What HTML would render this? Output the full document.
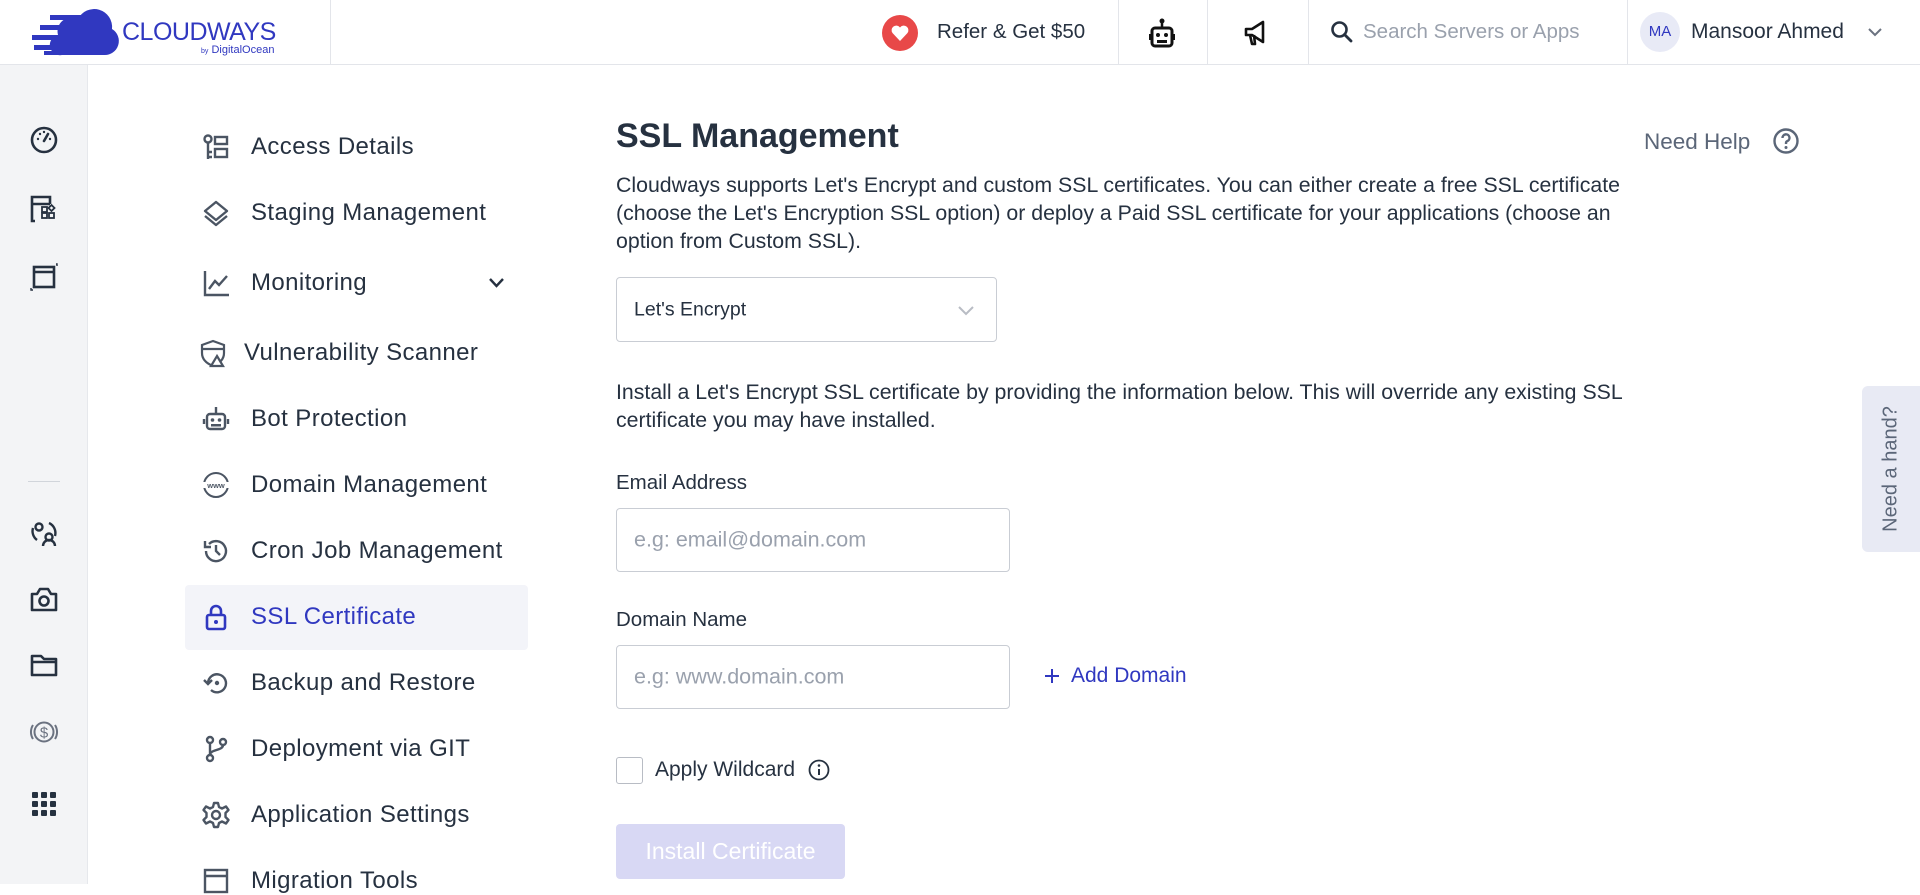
<!DOCTYPE html>
<html><head><meta charset="utf-8"><style>
*{margin:0;padding:0;box-sizing:border-box}
body{width:1920px;height:884px;overflow:hidden;background:#fff;font-family:"Liberation Sans",sans-serif;color:#263140;position:relative}
.a{position:absolute;white-space:nowrap}
.hdr{position:absolute;left:0;top:0;width:1920px;height:65px;border-bottom:1px solid #e3e5ea;background:#fff}
.vd{position:absolute;top:0;width:1px;height:65px;background:#e3e5ea}
.rail{position:absolute;left:0;top:65px;width:88px;height:819px;background:#f3f4f6;border-right:1px solid #e6e8ec}
.ri{position:absolute;left:29px;width:30px;height:30px}
.nav{position:absolute;left:251px;font-size:24px;letter-spacing:.4px;color:#263140;transform:translateY(-50%)}
.ni{position:absolute;left:202px;width:28px;height:28px;transform:translateY(-50%)}
svg{overflow:visible}
.p{font-size:21.3px;line-height:28px;color:#263140}
.inp{position:absolute;border:1px solid #c9cdd4;border-radius:4px;background:#fff}
.ph{position:absolute;left:17px;top:50%;transform:translateY(-50%);font-size:21.5px;color:#9aa1ad}
</style></head><body>
<div class="hdr">
 <svg class="a" style="left:32px;top:11px" width="86" height="44" viewBox="0 0 86 44">
  <path d="M30 44 H72 A14 14 0 0 0 80 18 A18 18 0 0 0 46 8 A14 14 0 0 0 26 24 A10 10 0 0 0 30 44Z" fill="#3038c0"/>
  <rect x="18" y="4" width="32" height="5" fill="#3038c0"/><rect x="8" y="14" width="34" height="5" fill="#3038c0"/><rect x="0" y="24" width="30" height="5" fill="#3038c0"/><rect x="2" y="34" width="18" height="5" fill="#3038c0"/><rect x="12" y="40" width="26" height="4" fill="#3038c0"/>
 </svg>
 <div class="a" style="left:122px;top:18px;font-size:25px;color:#3038c0;letter-spacing:-.5px">CLOUDWAYS</div>
 <div class="a" style="left:201px;top:44px;font-size:11px;color:#3038c0"><span style="font-size:7px">by</span> DigitalOcean</div>
 <div class="vd" style="left:330px"></div>
 <div class="a" style="left:882px;top:15px;width:36px;height:36px;border-radius:50%;background:#e84848"></div>
 <svg class="a" style="left:891px;top:25px" width="18" height="16" viewBox="0 0 18 16"><path d="M9 16 L1.5 8 A4.5 4.5 0 0 1 9 2.5 A4.5 4.5 0 0 1 16.5 8Z" fill="#fff"/></svg>
 <div class="a" style="left:937px;top:20px;font-size:20.5px;color:#263140">Refer &amp; Get $50</div>
 <div class="vd" style="left:1118px"></div>
 <svg class="a" style="left:1148px;top:18px" width="28" height="32" viewBox="0 0 28 32"><line x1="14" y1="2" x2="14" y2="9" stroke="#111" stroke-width="2.5"/><circle cx="14" cy="3" r="2.5" fill="#111"/><rect x="4" y="10" width="20" height="18" rx="3" fill="none" stroke="#111" stroke-width="3"/><rect x="1" y="16" width="3" height="6" fill="#111"/><rect x="24" y="16" width="3" height="6" fill="#111"/><circle cx="10" cy="17" r="2" fill="#111"/><circle cx="18" cy="17" r="2" fill="#111"/><rect x="9" y="22" width="10" height="3" fill="#111"/></svg>
 <div class="vd" style="left:1207px"></div>
 <svg class="a" style="left:1243px;top:20px" width="26" height="26" viewBox="0 0 26 26"><path d="M3 9 H9 L20 2 V22 L9 15 H3Z M7 15 L9 24 H12 L11 15" fill="none" stroke="#111" stroke-width="2.6" stroke-linejoin="round"/></svg>
 <div class="vd" style="left:1308px"></div>
 <svg class="a" style="left:1330px;top:20px" width="24" height="24" viewBox="0 0 24 24"><circle cx="9.5" cy="9.5" r="7" fill="none" stroke="#263140" stroke-width="2.6"/><line x1="14.5" y1="14.5" x2="21" y2="21" stroke="#263140" stroke-width="2.8" stroke-linecap="round"/></svg>
 <div class="a" style="left:1363px;top:20px;font-size:20.5px;color:#9aa1ad">Search Servers or Apps</div>
 <div class="vd" style="left:1627px"></div>
 <div class="a" style="left:1640px;top:12px;width:40px;height:40px;border-radius:50%;background:#e8eaf6;color:#3038c0;font-size:15px;text-align:center;line-height:40px">MA</div>
 <div class="a" style="left:1691px;top:20px;font-size:21px;color:#263140">Mansoor Ahmed</div>
 <svg class="a" style="left:1868px;top:28px" width="14" height="9" viewBox="0 0 14 9"><path d="M1 1 L7 7 L13 1" fill="none" stroke="#6b7280" stroke-width="2"/></svg>
</div>
<div class="rail">
 <svg class="ri" style="top:60px" viewBox="0 0 30 30"><circle cx="15" cy="15" r="12" fill="none" stroke="#263140" stroke-width="2.6"/><line x1="15" y1="16" x2="19" y2="9" stroke="#263140" stroke-width="2.6" stroke-linecap="round"/><circle cx="9" cy="14" r="1.2" fill="#263140"/><circle cx="11" cy="9" r="1.2" fill="#263140"/><circle cx="15" cy="7" r="1.2" fill="#263140"/><circle cx="21" cy="14" r="1.2" fill="#263140"/></svg>
 <svg class="ri" style="top:129px" viewBox="0 0 30 30"><path d="M6 27 H3 V3 H21 V10 M3 10 H21" fill="none" stroke="#263140" stroke-width="2.6"/><rect x="13" y="19" width="5" height="5" fill="none" stroke="#263140" stroke-width="1.8"/><rect x="20" y="19" width="5" height="5" fill="none" stroke="#263140" stroke-width="1.8"/><rect x="13" y="13" width="5" height="5" fill="none" stroke="#263140" stroke-width="1.8"/><path d="M22.5 11 L25.5 14 L22.5 17 L19.5 14Z" fill="none" stroke="#263140" stroke-width="1.8"/></svg>
 <svg class="ri" style="top:197px" viewBox="0 0 30 30"><rect x="5" y="5" width="20" height="20" fill="none" stroke="#263140" stroke-width="2.6"/><line x1="5" y1="10" x2="25" y2="10" stroke="#263140" stroke-width="2.6"/><path d="M27 2 H28 V4 M2 26 V28 H4" fill="none" stroke="#263140" stroke-width="1.4"/></svg>
 <div class="a" style="left:28px;top:416px;width:32px;height:1px;background:#d1d5db"></div>
 <svg class="ri" style="top:453px" viewBox="0 0 30 30"><circle cx="10" cy="9" r="3.5" fill="none" stroke="#263140" stroke-width="2.4"/><circle cx="20" cy="19" r="3.5" fill="none" stroke="#263140" stroke-width="2.4"/><path d="M14 28 A6 6 0 0 1 26 28 M4 10 A11 11 0 0 0 8 22 M26 18 A11 11 0 0 0 20 5" fill="none" stroke="#263140" stroke-width="2.4"/></svg>
 <svg class="ri" style="top:519px" viewBox="0 0 30 30"><path d="M3 10 H8 L11 5 H19 L22 10 H27 V26 H3Z" fill="none" stroke="#263140" stroke-width="2.6" stroke-linejoin="round"/><circle cx="15" cy="17" r="4.5" fill="none" stroke="#263140" stroke-width="2.6"/></svg>
 <svg class="ri" style="top:585px" viewBox="0 0 30 30"><path d="M3 6 H12 L15 9 H27 V25 H3Z M3 12 H27" fill="none" stroke="#263140" stroke-width="2.6" stroke-linejoin="round"/></svg>
 <svg class="ri" style="top:652px" viewBox="0 0 30 30"><circle cx="15" cy="15" r="9.5" fill="none" stroke="#6b7280" stroke-width="2"/><path d="M4 8 A13 13 0 0 0 4 22 M26 8 A13 13 0 0 1 26 22" fill="none" stroke="#6b7280" stroke-width="2"/><text x="15" y="20.5" font-size="15" text-anchor="middle" fill="#6b7280" font-family="Liberation Sans">$</text></svg>
 <svg class="ri" style="top:724px" viewBox="0 0 30 30"><g fill="#263140"><rect x="3" y="3" width="6" height="6" rx="1"/><rect x="12" y="3" width="6" height="6" rx="1"/><rect x="21" y="3" width="6" height="6" rx="1"/><rect x="3" y="12" width="6" height="6" rx="1"/><rect x="12" y="12" width="6" height="6" rx="1"/><rect x="21" y="12" width="6" height="6" rx="1"/><rect x="3" y="21" width="6" height="6" rx="1"/><rect x="12" y="21" width="6" height="6" rx="1"/><rect x="21" y="21" width="6" height="6" rx="1"/></g></svg>
</div>

<div class="a" style="left:185px;top:585px;width:343px;height:65px;background:#f3f4f9;border-radius:4px"></div>
<svg class="ni" style="top:147px" viewBox="0 0 28 28"><g fill="none" stroke="#4b5563" stroke-width="2.4"><circle cx="6" cy="6" r="3.5"/><path d="M6 10 V26 M6 19 H10 M6 24 H10"/><rect x="13" y="4" width="12" height="7"/><rect x="13" y="16" width="12" height="8"/></g></svg>
<div class="nav" style="top:147px">Access Details</div>
<svg class="ni" style="top:213px" viewBox="0 0 28 28"><g fill="none" stroke="#4b5563" stroke-width="2.4" stroke-linejoin="round"><path d="M14 3 L25 12 L14 21 L3 12Z"/><path d="M3 17 L14 26 L25 17"/></g></svg>
<div class="nav" style="top:213px">Staging Management</div>
<svg class="ni" style="top:283px" viewBox="0 0 28 28"><g fill="none" stroke="#4b5563" stroke-width="2.4"><path d="M3 2 V26 H27"/><path d="M7 20 L13 12 L17 16 L25 7"/></g></svg>
<div class="nav" style="top:283px">Monitoring</div>
<svg class="a" style="left:489px;top:278px" width="15" height="10" viewBox="0 0 15 10"><path d="M1 1 L7.5 8 L14 1" fill="none" stroke="#263140" stroke-width="2.4"/></svg>
<svg class="ni" style="top:353px;left:199px" viewBox="0 0 28 28"><g fill="none" stroke="#4b5563" stroke-width="2.2"><path d="M14 2 L25 6 V14 C25 21 19 25 14 27 C9 25 3 21 3 14 V6Z"/><path d="M3 10 H25"/><path d="M18 17 L24 27 H12Z" fill="#fff"/></g></svg>
<div class="nav" style="top:353px;left:244px">Vulnerability Scanner</div>
<svg class="ni" style="top:419px" viewBox="0 0 28 28"><g fill="none" stroke="#4b5563" stroke-width="2.4"><path d="M14 2 V8"/><rect x="5" y="9" width="18" height="15" rx="3"/><path d="M2 14 V19 M26 14 V19"/></g><circle cx="10.5" cy="15" r="1.8" fill="#4b5563"/><circle cx="17.5" cy="15" r="1.8" fill="#4b5563"/><rect x="9" y="19" width="10" height="2.5" fill="#4b5563"/></svg>
<div class="nav" style="top:419px">Bot Protection</div>
<svg class="ni" style="top:485px" viewBox="0 0 28 28"><g fill="none" stroke="#4b5563" stroke-width="2"><circle cx="14" cy="14" r="12"/></g><rect x="0" y="11" width="28" height="6" fill="#fff"/><text x="14" y="17" font-size="7.5" font-weight="bold" text-anchor="middle" fill="#4b5563" font-family="Liberation Sans">www</text></svg>
<div class="nav" style="top:485px">Domain Management</div>
<svg class="ni" style="top:551px" viewBox="0 0 28 28"><g fill="none" stroke="#4b5563" stroke-width="2.4"><path d="M4 14 A10 10 0 1 0 7 7"/><path d="M3 4 V10 H9"/><path d="M14 8 V14 L18 18"/></g></svg>
<div class="nav" style="top:551px">Cron Job Management</div>
<svg class="ni" style="top:617px" viewBox="0 0 28 28"><g fill="none" stroke="#3038c0" stroke-width="2.6"><rect x="5" y="12" width="18" height="14" rx="2"/><path d="M9 12 V8 A5 5 0 0 1 19 8 V12"/></g><circle cx="14" cy="19" r="2" fill="#3038c0"/></svg>
<div class="nav" style="top:617px;color:#3038c0">SSL Certificate</div>
<svg class="ni" style="top:683px" viewBox="0 0 28 28"><g fill="none" stroke="#4b5563" stroke-width="2.4"><path d="M6 14 A9 9 0 1 1 9 21"/><path d="M2 11 L6 15 L10 11"/></g><circle cx="15" cy="14" r="2.2" fill="#4b5563"/></svg>
<div class="nav" style="top:683px">Backup and Restore</div>
<svg class="ni" style="top:749px" viewBox="0 0 28 28"><g fill="none" stroke="#4b5563" stroke-width="2.4"><circle cx="8" cy="5" r="3"/><circle cx="8" cy="23" r="3"/><circle cx="21" cy="7" r="3"/><path d="M8 8 V20 M21 10 C21 16 8 14 8 20"/></g></svg>
<div class="nav" style="top:749px">Deployment via GIT</div>
<svg class="ni" style="top:815px" viewBox="0 0 28 28"><g fill="none" stroke="#4b5563" stroke-width="2.4"><circle cx="14" cy="14" r="4"/><path d="M12 2 H16 L17 6 L20 7.5 L24 5.5 L26.5 9 L23.5 12 V16 L26.5 19 L24 22.5 L20 20.5 L17 22 L16 26 H12 L11 22 L8 20.5 L4 22.5 L1.5 19 L4.5 16 V12 L1.5 9 L4 5.5 L8 7.5 L11 6Z" stroke-linejoin="round"/></g></svg>
<div class="nav" style="top:815px">Application Settings</div>
<svg class="ni" style="top:881px" viewBox="0 0 28 28"><g fill="none" stroke="#4b5563" stroke-width="2.4"><rect x="3" y="3" width="22" height="22"/><path d="M3 9 H25"/></g></svg>
<div class="nav" style="top:881px">Migration Tools</div>

<div class="a" style="left:616px;top:117px;font-size:34px;font-weight:bold;color:#263140">SSL Management</div>
<div class="a" style="left:1644px;top:129px;font-size:22.5px;color:#5b6678">Need Help</div>
<svg class="a" style="left:1773px;top:128px" width="26" height="26" viewBox="0 0 26 26"><circle cx="13" cy="13" r="11.5" fill="none" stroke="#5b6678" stroke-width="2.4"/><path d="M9.5 10 A3.5 3.5 0 1 1 14 13.2 C13 13.6 13 14.5 13 16" fill="none" stroke="#5b6678" stroke-width="2.4"/><circle cx="13" cy="19.5" r="1.5" fill="#5b6678"/></svg>
<div class="a p" style="left:616px;top:171px">Cloudways supports Let's Encrypt and custom SSL certificates. You can either create a free SSL certificate<br>(choose the Let's Encryption SSL option) or deploy a Paid SSL certificate for your applications (choose an<br>option from Custom SSL).</div>
<div class="inp" style="left:616px;top:277px;width:381px;height:65px"><div class="ph" style="color:#263140;font-size:19.5px">Let's Encrypt</div>
<svg class="a" style="right:22px;top:28px" width="16" height="10" viewBox="0 0 16 10"><path d="M1 1 L8 8 L15 1" fill="none" stroke="#b8bcc4" stroke-width="2"/></svg></div>
<div class="a p" style="left:616px;top:378px">Install a Let's Encrypt SSL certificate by providing the information below. This will override any existing SSL<br>certificate you may have installed.</div>
<div class="a" style="left:616px;top:471px;font-size:20.5px">Email Address</div>
<div class="inp" style="left:616px;top:508px;width:394px;height:64px"><div class="ph">e.g: email@domain.com</div></div>
<div class="a" style="left:616px;top:608px;font-size:20.5px">Domain Name</div>
<div class="inp" style="left:616px;top:645px;width:394px;height:64px"><div class="ph">e.g: www.domain.com</div></div>
<svg class="a" style="left:1044px;top:668px" width="16" height="16" viewBox="0 0 16 16"><path d="M8 1 V15 M1 8 H15" stroke="#3038c0" stroke-width="2"/></svg>
<div class="a" style="left:1071px;top:664px;font-size:21px;color:#3038c0">Add Domain</div>
<div class="a" style="left:616px;top:757px;width:27px;height:27px;border:1px solid #b8bcc4;border-radius:3px"></div>
<div class="a" style="left:655px;top:758px;font-size:21px">Apply Wildcard</div>
<svg class="a" style="left:808px;top:759px" width="22" height="22" viewBox="0 0 22 22"><circle cx="11" cy="11" r="9.5" fill="none" stroke="#263140" stroke-width="1.8"/><path d="M11 10 V16" stroke="#263140" stroke-width="2"/><circle cx="11" cy="6.5" r="1.3" fill="#263140"/></svg>
<div class="a" style="left:616px;top:824px;width:229px;height:55px;background:#d8d8f4;border-radius:4px;color:#fff;font-size:23px;text-align:center;line-height:55px">Install Certificate</div>
<div class="a" style="left:1862px;top:386px;width:58px;height:166px;background:#e8eaf4;border-radius:6px 0 0 6px"></div>
<div class="a" style="left:1891px;top:469px;font-size:20px;color:#5b6678;transform:translate(-50%,-50%) rotate(-90deg)">Need a hand?</div>
</body></html>
